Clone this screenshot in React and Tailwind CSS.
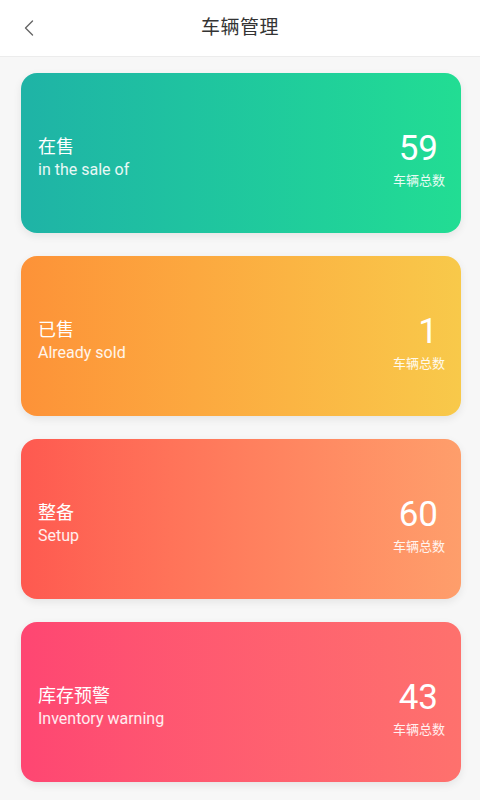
import { ChevronLeft } from 'lucide-react';

const cards = [
  {
    title: '在售',
    subtitle: 'in the sale of',
    count: 59,
    bg: 'bg-gradient-to-r from-[#1fb3a6] to-[#22dd93]',
  },
  {
    title: '已售',
    subtitle: 'Already sold',
    count: 1,
    bg: 'bg-gradient-to-r from-[#fd9238] to-[#f8c94a]',
  },
  {
    title: '整备',
    subtitle: 'Setup',
    count: 60,
    bg: 'bg-gradient-to-r from-[#fe5950] to-[#fe9e6b]',
  },
  {
    title: '库存预警',
    subtitle: 'Inventory warning',
    count: 43,
    bg: 'bg-gradient-to-r from-[#fe4672] to-[#fe716d]',
  },
];

export default function App() {
  return (
    <div className="min-h-screen bg-[#f7f7f7] font-['Roboto','Noto_Sans_CJK_SC',sans-serif] antialiased">
      <header className="relative h-[57px] bg-white border-b border-[#ececec] flex items-center justify-center">
        <button className="absolute left-[15px] top-[14px] text-[#666]">
          <ChevronLeft className="w-[28px] h-[28px]" strokeWidth={1.2} />
        </button>
        <h1 className="text-[19px] text-[#333] tracking-[0.5px]">车辆管理</h1>
      </header>

      <main className="flex flex-col gap-[23px] pl-[21px] pr-[19px] pt-[16px] pb-[18px]">
        {cards.map((card) => (
          <div
            key={card.title}
            className={`h-[160px] rounded-[16px] ${card.bg} shadow-[0_3px_8px_rgba(0,0,0,0.08)] flex items-center justify-between pl-[17px] pr-[16px] text-white`}
          >
            <div className="flex flex-col pt-[8px]">
              <span className="text-[18px] leading-[24px]">{card.title}</span>
              <span className="text-[16px] leading-[21px] text-white/90">{card.subtitle}</span>
            </div>
            <div className="flex flex-col items-end pt-[14px]">
              <span className="text-[35px] leading-[38px] pr-[7px]">{card.count}</span>
              <span className="text-[13px] leading-[18px] mt-[4px] text-white/90">车辆总数</span>
            </div>
          </div>
        ))}
      </main>
    </div>
  );
}
